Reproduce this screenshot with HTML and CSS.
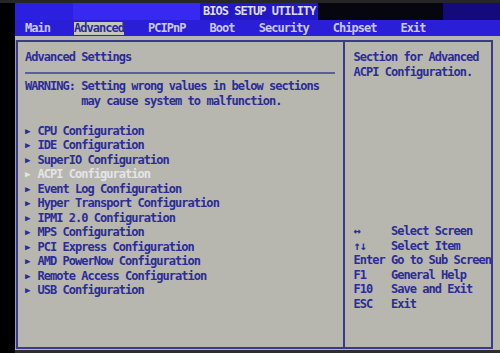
FILE: index.html
```html
<!doctype html>
<html lang="en">
<head>
    <meta charset="utf-8">
    <title>BIOS Setup Utility</title>
    <link rel="stylesheet" href="styles.css">
</head>
<body>
    <div class="screen">
        <div class="titlebar"><span class="title">BIOS SETUP UTILITY</span></div>
        <div class="menubar">
            <span class="tab">Main</span>
            <span class="tab active">Advanced</span>
            <span class="tab">PCIPnP</span>
            <span class="tab">Boot</span>
            <span class="tab">Security</span>
            <span class="tab">Chipset</span>
            <span class="tab">Exit</span>
        </div>
        <div class="main">
            <div class="frame">
                <div class="panel settings">
                    <div class="row">Advanced Settings</div>
                    <div class="rule"></div>
                    <div class="row">WARNING: Setting wrong values in below sections</div>
                    <div class="row">         may cause system to malfunction.</div>
                    <div class="row"></div>
                    <ul class="items">
                        <li>CPU Configuration</li>
                        <li>IDE Configuration</li>
                        <li>SuperIO Configuration</li>
                        <li class="selected">ACPI Configuration</li>
                        <li>Event Log Configuration</li>
                        <li>Hyper Transport Configuration</li>
                        <li>IPMI 2.0 Configuration</li>
                        <li>MPS Configuration</li>
                        <li>PCI Express Configuration</li>
                        <li>AMD PowerNow Configuration</li>
                        <li>Remote Access Configuration</li>
                        <li>USB Configuration</li>
                    </ul>
                </div>
                <div class="panel help">
                    <div class="row">Section for Advanced</div>
                    <div class="row">ACPI Configuration.</div>
                    <div class="keys">
                        <div class="row"><span class="key">&#8596;</span>Select Screen</div>
                        <div class="row"><span class="key">&#8593;&#8595;</span>Select Item</div>
                        <div class="row"><span class="key">Enter</span>Go to Sub Screen</div>
                        <div class="row"><span class="key">F1</span>General Help</div>
                        <div class="row"><span class="key">F10</span>Save and Exit</div>
                        <div class="row"><span class="key">ESC</span>Exit</div>
                    </div>
                </div>
            </div>
        </div>
    </div>
</body>
</html>
```

FILE: styles.css
```css
body {
    margin: 0;
    background: #000;
    border-top: 3px solid #262626;
    font-family: "DejaVu Sans Mono", "Liberation Mono", monospace;
    font-weight: bold;
    font-size: 12px;
    letter-spacing: -0.97px;
}

.screen {
    margin-left: 15px;
    width: 485px;
    border-bottom: 3px solid #2e2e2e;
}

.titlebar {
    height: 17px;
    line-height: 17px;
    padding-left: 188px;
    background: linear-gradient(to right,
        #2b1fe0 0, #2b1fe0 58px,
        #3729f2 58px, #3729f2 185px,
        #2417c6 185px, #2417c6 303px,
        #06060f 303px, #06060f 428px,
        #150a7c 428px);
    color: #dcdcea;
}

.menubar {
    height: 16px;
    display: flex;
    align-items: center;
    gap: 24px;
    padding-left: 10px;
    background: #2a1fd6;
    color: #c8c8f0;
}

.tab {
    line-height: 13px;
}

.tab.active {
    background: #c6c6be;
    color: #2c2c96;
}

.main {
    height: 309px;
    padding: 4px 7px 1px 1px;
    background: #b7b7af;
}

.frame {
    height: 305px;
    display: flex;
    border: 2px solid #3a3a8c;
    box-shadow: -1px 0 0 #9a9abf;
    color: #2c2c96;
}

.panel {
    padding-top: 8px;
}

.settings {
    width: 313px;
    padding-left: 7px;
    padding-right: 8px;
    border-right: 2px solid #3a3a8c;
}

.help {
    flex: 1;
    padding-left: 8px;
}

.row {
    height: 14.5px;
    line-height: 14.5px;
    white-space: pre;
}

.rule {
    height: 14.5px;
    background: linear-gradient(#5c5ca0, #5c5ca0) 0 7px / 100% 2px no-repeat;
}

.items {
    margin: 0;
    padding: 1px 0 0;
    list-style: none;
}

.items li {
    height: 14.5px;
    line-height: 14.5px;
    white-space: pre;
}

.items li::before {
    content: "\25B6";
    display: inline-block;
    width: 12.5px;
    font-size: 9px;
    letter-spacing: 0;
    vertical-align: 1px;
}

.items li.selected {
    color: #e4e4e8;
}

.keys {
    margin-top: 145px;
}

.key {
    display: inline-block;
    width: 37.5px;
}
```
